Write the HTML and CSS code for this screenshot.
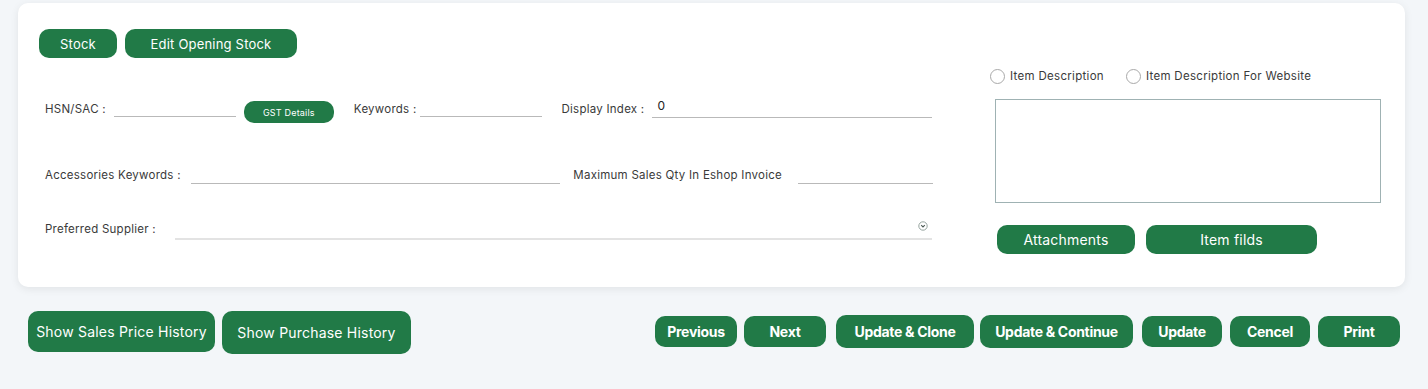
FILE: index.html
```html
<!DOCTYPE html>
<html>
<head>
	<meta charset="utf-8">
	<title>Item - Stock</title>
	<link rel="stylesheet" href="styles.css">
</head>
<body>
	<div class="card">
		<div class="left">
			<div class="top-btns">
				<button class="btn btn-stock">Stock</button>
				<button class="btn btn-open">Edit Opening Stock</button>
			</div>

			<div class="row row1">
				<span class="lbl">HSN/SAC :</span>
				<input class="line w-hsn" type="text">
				<button class="btn btn-gst">GST Details</button>
				<span class="lbl lbl-kw">Keywords :</span>
				<input class="line w-kw" type="text">
				<span class="lbl lbl-di">Display Index :</span>
				<input class="line w-di" type="text" value="0">
			</div>

			<div class="row row2">
				<span class="lbl">Accessories Keywords :</span>
				<input class="line w-acc" type="text">
				<span class="lbl lbl-max">Maximum Sales Qty In Eshop Invoice</span>
				<input class="line w-max" type="text">
			</div>

			<div class="row row3">
				<span class="lbl">Preferred Supplier :</span>
				<div class="select">
					<svg class="chev" width="10" height="10" viewBox="0 0 10 10">
						<circle cx="5" cy="5" r="4.2" fill="none" stroke="#8a9a94" stroke-width="0.9"/>
						<path d="M3.2 4.1 L5 5.9 L6.8 4.1" fill="none" stroke="#4c5a55" stroke-width="1.1"/>
					</svg>
				</div>
			</div>
		</div>

		<div class="right">
			<div class="radios">
				<label class="radio"><span class="dot"></span>Item Description</label>
				<label class="radio"><span class="dot"></span>Item Description For Website</label>
			</div>
			<textarea class="desc"></textarea>
			<div class="right-btns">
				<button class="btn btn-att">Attachments</button>
				<button class="btn btn-fld">Item filds</button>
			</div>
		</div>
	</div>

	<div class="bottom">
		<div class="hist">
			<button class="btn btn-hs">Show Sales Price History</button>
			<button class="btn btn-hp">Show Purchase History</button>
		</div>
		<div class="actions">
			<button class="btn act w-prev">Previous</button>
			<button class="btn act w-next">Next</button>
			<button class="btn act w-uc">Update &amp; Clone</button>
			<button class="btn act w-ucon">Update &amp; Continue</button>
			<button class="btn act w-up">Update</button>
			<button class="btn act w-can">Cencel</button>
			<button class="btn act w-pr">Print</button>
		</div>
	</div>
</body>
</html>
```

FILE: styles.css
```css
* {margin: 0; padding: 0; box-sizing: border-box;}
body {background: #f3f6f9; font-family: Inter, "Liberation Sans", sans-serif; color: #333;}

.card {display: flex; margin: 3px 23px 0 18px; height: 284px; padding: 26px 24px 0 21px; background: #fff; border-radius: 10px; box-shadow: 0 2px 8px rgba(0,0,0,0.08);}
.left {width: 894px;}
.right {margin-left: 57px; flex: 1;}

.btn {border: 0; background: #217a47; color: #fff; font-family: Inter, "Liberation Sans", sans-serif; font-weight: 400; border-radius: 10px; cursor: pointer; letter-spacing: 0.2px;}

.top-btns {display: flex; gap: 8px;}
.btn-stock {width: 78px; height: 29px; font-size: 13px;}
.btn-open {width: 172px; height: 29px; font-size: 13px;}

.row {display: flex; align-items: center; padding-left: 6px; height: 22px;}
.row1 {margin-top: 40px;}
.row2 {margin-top: 44px;}
.row3 {margin-top: 32px;}

.lbl {font-size: 11.5px; letter-spacing: 0.25px; color: #3a3a3a; white-space: nowrap;}
.line {border: 0; border-bottom: 1px solid #b9b9b9; height: 16px; font-family: Inter, "Liberation Sans", sans-serif; font-size: 12px; color: #222; padding: 0 5px; outline: none; background: transparent;}

.w-hsn {width: 122px; margin-left: 8px;}
.btn-gst {width: 90px; height: 22px; font-size: 9px; margin-left: 8px; margin-top: 6px;}
.lbl-kw {margin-left: 20px;}
.w-kw {width: 122px; margin-left: 4px;}
.lbl-di {margin-left: 19px;}
.w-di {width: 280px; margin-left: 8px; height: 20px; margin-top: -2px; padding-bottom: 5px;}

.row2 .line {margin-top: 2px;}
.w-acc {width: 370px; margin-left: 10px;}
.lbl-max {margin-left: 13px;}
.w-max {width: 135px; margin-left: 16px;}

.select {position: relative; flex: 1; height: 19px; margin-left: 19px; margin-top: 2px; margin-right: 1px; border-bottom: 2px solid #e3e3e3;}
.chev {position: absolute; right: 4px; top: 0;}

.radios {display: flex; gap: 22px; margin-top: 39px; height: 16px; align-items: center;}
.radio {display: flex; align-items: center; font-size: 11.5px; letter-spacing: 0.3px; color: #3a3a3a;}
.dot {width: 15px; height: 15px; border: 1px solid #a9a9a9; border-radius: 50%; margin-right: 5px;}

.desc {display: block; width: 386px; height: 104px; margin: 15px 0 0 5px; border: 1px solid #9fb2b3; resize: none; outline: none;}

.right-btns {display: flex; gap: 11px; margin: 22px 0 0 7px;}
.btn-att {width: 138px; height: 29px; font-size: 14px;}
.btn-fld {width: 171px; height: 29px; font-size: 14px;}

.bottom {display: flex; justify-content: space-between; align-items: center; margin: 24px 28px 0 28px;}
.hist {display: flex; gap: 7px; align-items: flex-start;}
.btn-hs {width: 187px; height: 41px; font-size: 14px;}
.btn-hp {width: 189px; height: 43px; font-size: 14px;}

.actions {display: flex; align-items: center; gap: 8px; margin-top: -2px;}
.act {height: 31px; font-size: 14px; font-weight: 700; letter-spacing: -0.3px;}
.w-prev {width: 82px;}
.w-next {width: 82px; margin-left: -1px;}
.w-uc {width: 138px; height: 33px; margin-left: 2px;}
.w-ucon {width: 153px; height: 33px; margin-left: -2px;}
.w-up {width: 80px; margin-left: 1px;}
.w-can {width: 80px;}
.w-pr {width: 82px;}
```
